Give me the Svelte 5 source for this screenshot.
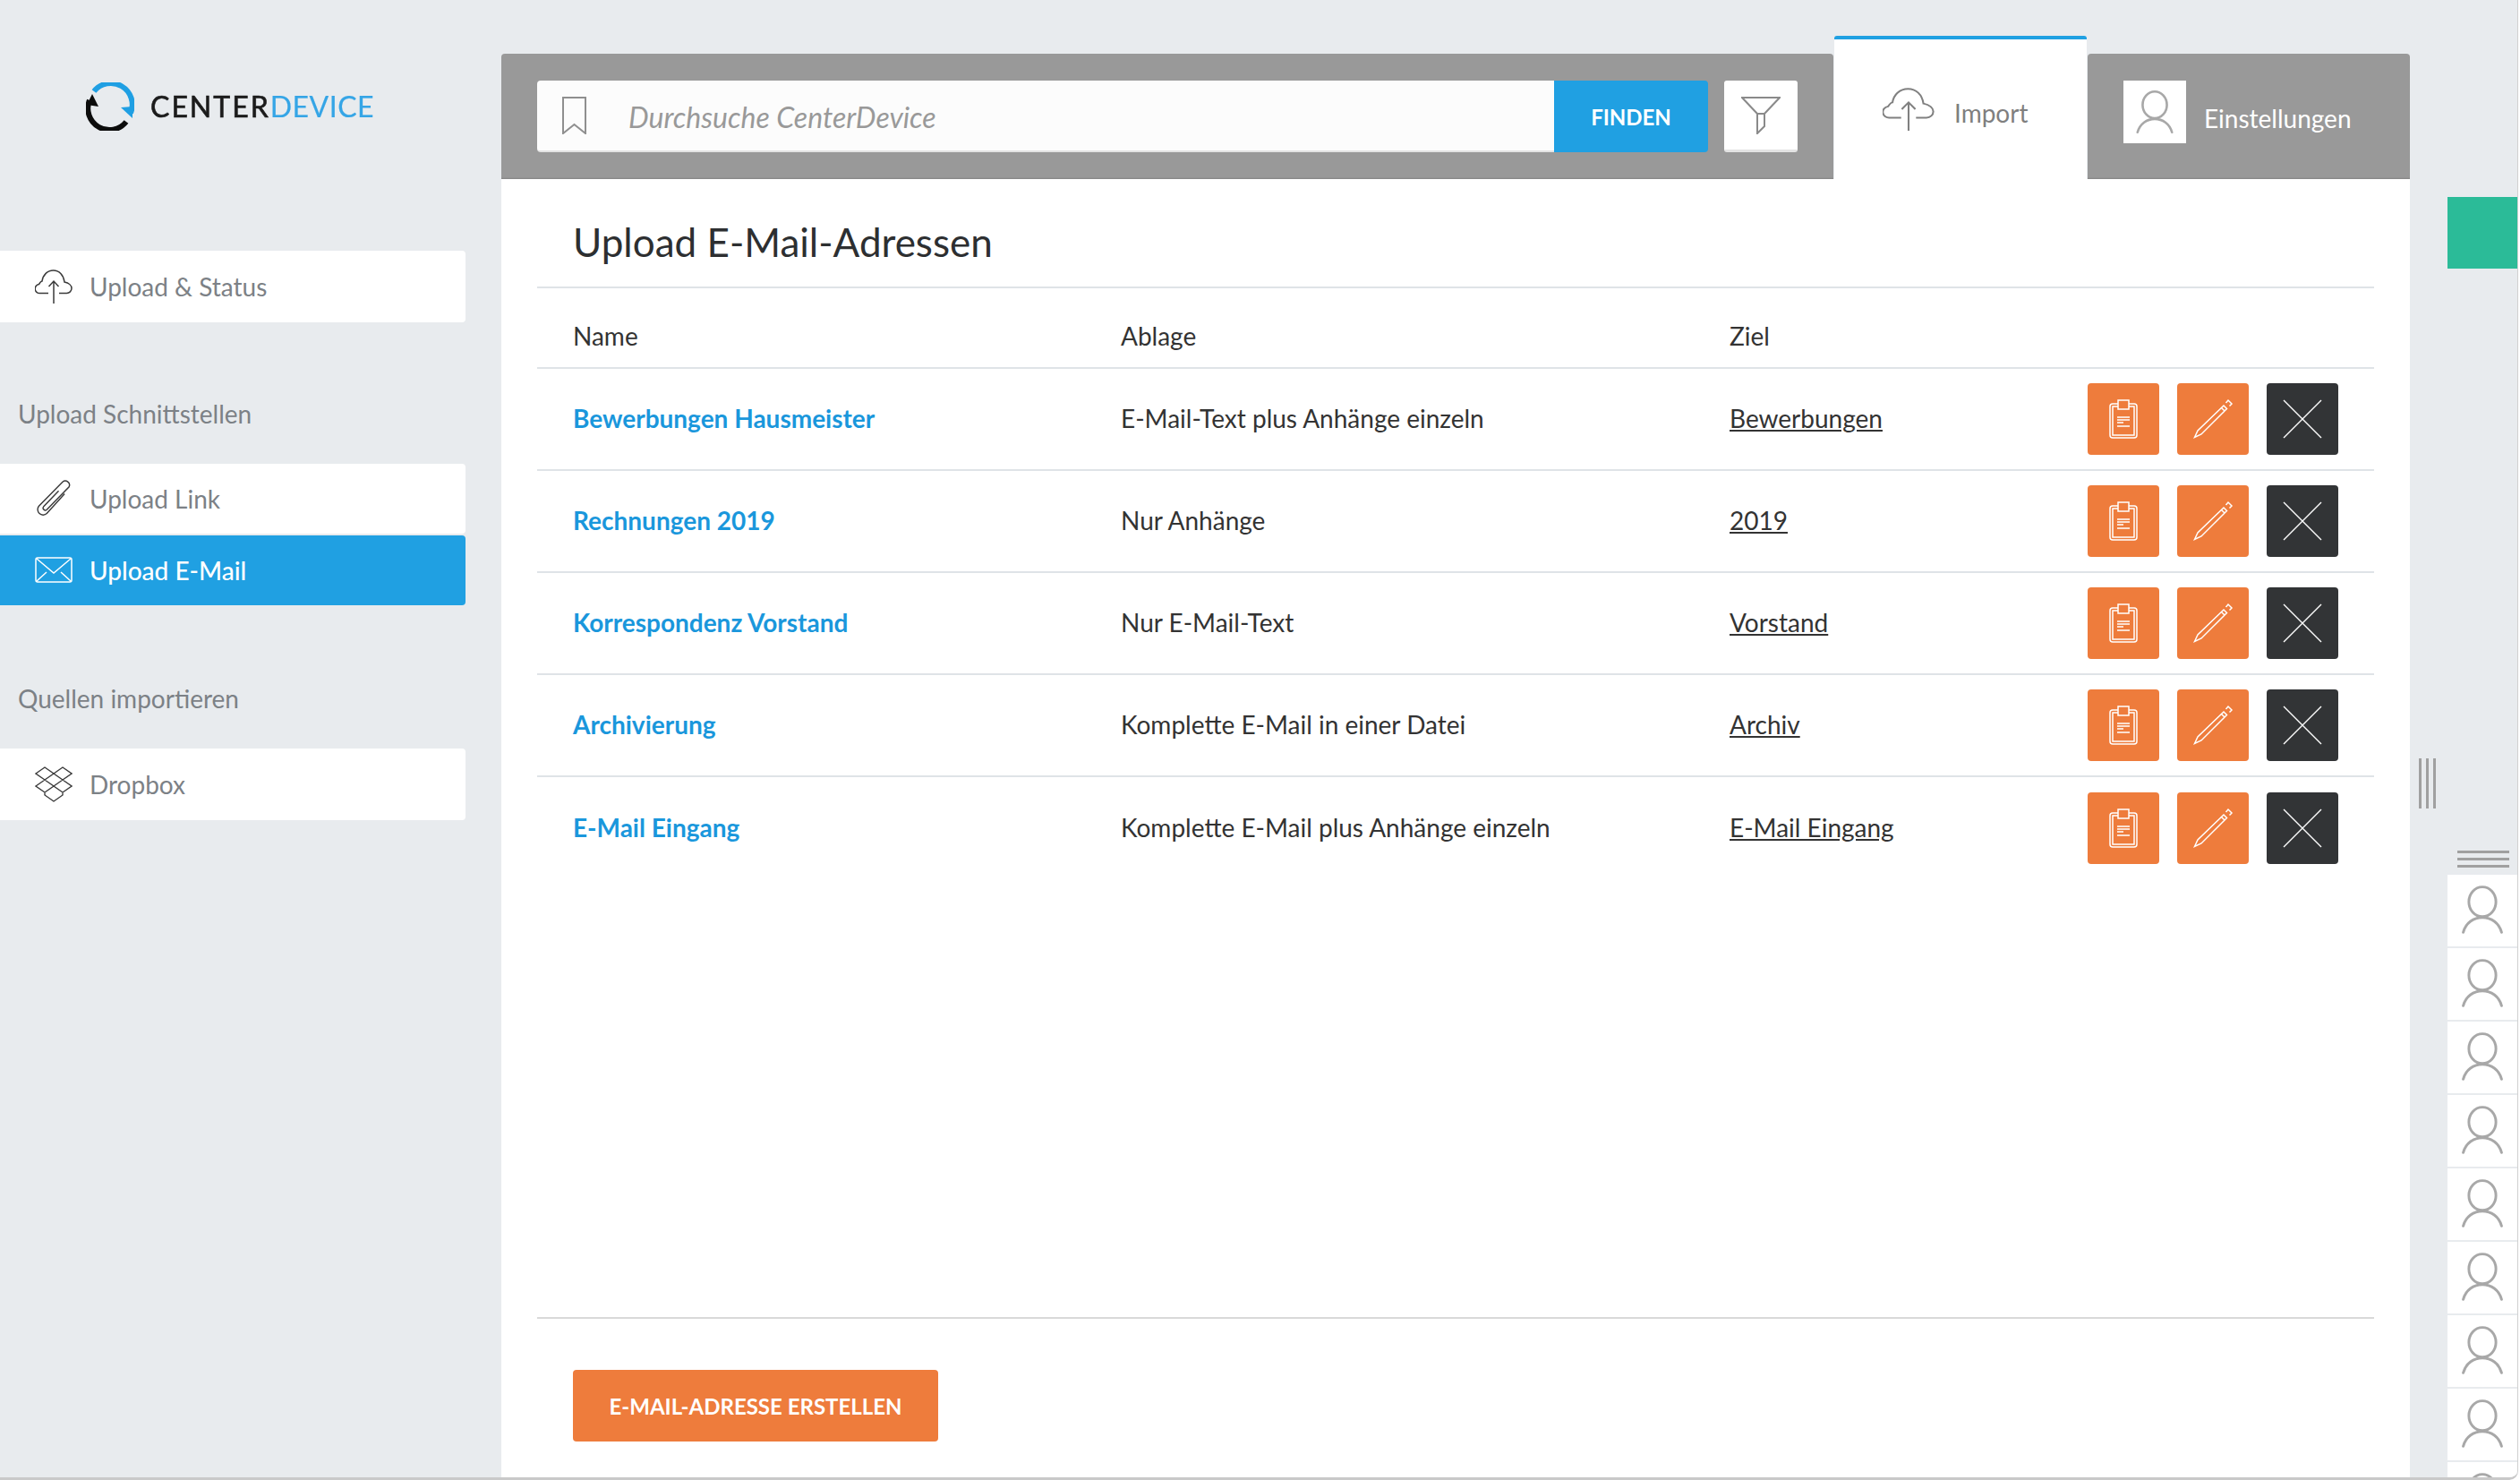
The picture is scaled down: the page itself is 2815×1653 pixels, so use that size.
<script>
  const ROWS = [
    { name: 'Bewerbungen Hausmeister', ablage: 'E-Mail-Text plus Anhänge einzeln', ziel: 'Bewerbungen' },
    { name: 'Rechnungen 2019', ablage: 'Nur Anhänge', ziel: '2019' },
    { name: 'Korrespondenz Vorstand', ablage: 'Nur E-Mail-Text', ziel: 'Vorstand' },
    { name: 'Archivierung', ablage: 'Komplette E-Mail in einer Datei', ziel: 'Archiv' },
    { name: 'E-Mail Eingang', ablage: 'Komplette E-Mail plus Anhänge einzeln', ziel: 'E-Mail Eingang' },
  ];

  const AVATARS = [1, 2, 3, 4, 5, 6, 7, 8, 9];
</script>

{#snippet cloud(w, h)}
  <svg class="ico" width={w} height={h} viewBox="0 0 42 38" preserveAspectRatio="none" fill="none" stroke="currentColor" stroke-width="1.5">
    <path d="M15 26.5H6a5 5 0 0 1-1.500-10C6 14 7 13 8 13c1-7 6-12 12.500-12C27 1 32 6 33 14c5 1 8 4 8 7a5.500 5.500 0 0 1-5.500 5.500H27" />
    <path d="M21 38V13M15.500 19l5.500-6 5.500 6" />
  </svg>
{/snippet}

{#snippet avatar(size)}
  <svg class="avatar" width={size} height={size} viewBox="0 0 78 80" fill="none" stroke="#a8a8a8" stroke-width="3">
    <ellipse cx="39" cy="31" rx="15.5" ry="17" />
    <path d="M17 66c3-11 12-17 22-17s19 6 22 17" stroke-linecap="round" />
  </svg>
{/snippet}

<div class="window">
  <aside class="sidebar">
    <div class="logo">
      <svg width="54" height="54" viewBox="0 0 54 54" fill="none" stroke-width="6">
        <path d="M9 10A24 24 0 0 1 50 34" stroke="#1f9fe3" />
        <path d="M39 28l13-1v13z" fill="#1f9fe3" />
        <path d="M45 44A24 24 0 0 1 4 20" stroke="#0c0c0c" />
        <path d="M7 13L1 25l13 2z" fill="#0c0c0c" />
      </svg>
      <span class="logo-text">CENTER<span class="logo-blue">DEVICE</span></span>
    </div>

    <a class="nav-item tall">
      {@render cloud(42, 38)}
      <span>Upload &amp; Status</span>
    </a>

    <div class="nav-title">Upload Schnittstellen</div>
    <a class="nav-item">
      <svg class="ico" width="42" height="42" viewBox="1 1 38 38" fill="none" stroke="currentColor" stroke-width="1.3">
        <path d="M31 15L13 35a5.500 5.500 0 0 1-8-7.500L29 3a4.200 4.200 0 0 1 6.500 5L13 31a2.200 2.200 0 0 1-3.200-3L25 12" />
      </svg>
      <span>Upload Link</span>
    </a>
    <a class="nav-item active">
      <svg class="ico" width="42" height="30" viewBox="0 0 42 30" fill="none" stroke="currentColor" stroke-width="1.5">
        <rect x="1" y="1" width="40" height="27" rx="2" />
        <path d="M2 2l19 16L40 2M2 27l11-10M40 27L29 17" />
      </svg>
      <span>Upload E-Mail</span>
    </a>

    <div class="nav-title second">Quellen importieren</div>
    <a class="nav-item tall">
      <svg class="ico" width="42" height="40" viewBox="0 0 42 40" fill="none" stroke="currentColor" stroke-width="1.4">
        <path d="M1 8l10-7 10 7-10 7zM21 8l10-7 10 7-10 7zM1 22l10-7 10 7-10 7zM21 22l10-7 10 7-10 7zM11 29v3l10 7 10-7v-3" />
      </svg>
      <span>Dropbox</span>
    </a>
  </aside>

  <main class="main">
    <header class="topbar">
      <div class="searchbar">
        <div class="search-input">
          <svg width="27" height="42" viewBox="0 0 27 42" fill="none" stroke="#8f8f8f" stroke-width="2">
            <path d="M1 1h25v40L13.500 31 1 41z" />
          </svg>
          <span class="placeholder">Durchsuche CenterDevice</span>
        </div>
        <button class="find">FINDEN</button>
        <button class="filter">
          <svg width="44" height="42" viewBox="0 0 44 42" fill="none" stroke="#8a8a8a" stroke-width="2">
            <path d="M1 1h42L26 19v14l-8 8V19zM18 19h8" />
          </svg>
        </button>
      </div>
      <div class="tab-import">
        {@render cloud(58, 48)}
        <span>Import</span>
      </div>
      <div class="settings">
        <div class="settings-avatar">{@render avatar(70)}</div>
        <span>Einstellungen</span>
      </div>
    </header>

    <section class="panel">
      <h1>Upload E-Mail-Adressen</h1>
      <div class="row head">
        <div>Name</div>
        <div>Ablage</div>
        <div>Ziel</div>
      </div>
      {#each ROWS as row (row.name)}
        <div class="row">
          <div><a class="name">{row.name}</a></div>
          <div>{row.ablage}</div>
          <div><a class="target">{row.ziel}</a></div>
          <div class="actions">
            <button class="act">
              <svg width="80" height="80" viewBox="0 0 80 80" fill="none" stroke="#fff" stroke-width="1.5">
                <rect x="25" y="23" width="30" height="38" rx="3" />
                <rect x="28" y="26" width="24" height="32" />
                <rect x="34" y="19" width="12" height="10" fill="#ee7c3c" />
                <path d="M33 38h14M33 41h14M33 44h7M33 48h14" />
              </svg>
            </button>
            <button class="act">
              <svg width="80" height="80" viewBox="0 0 80 80" fill="none" stroke="#fff" stroke-width="1.5">
                <path d="M19.500 60.500L23 53l29-28 3.500 3.500L27 57zM49.500 27.500l3.500 3.500" />
                <path d="M54.500 22l2.500-3 4 4-2.500 2.500" />
              </svg>
            </button>
            <button class="act dark">
              <svg width="80" height="80" viewBox="0 0 80 80" fill="none" stroke="#fff" stroke-width="1.4">
                <path d="M19 19l42 42M61 19L19 61" />
              </svg>
            </button>
          </div>
        </div>
      {/each}
      <div class="spacer"></div>
      <div class="panel-foot">
        <button class="create">E-MAIL-ADRESSE ERSTELLEN</button>
      </div>
    </section>
  </main>

  <div class="rail">
    <div class="grip-col">
      <i></i><i></i><i></i>
    </div>
    <div class="strip">
      <div class="green"></div>
      <div class="hgrip"><i></i><i></i><i></i></div>
      {#each AVATARS as a (a)}
        <div class="user">{@render avatar(78)}</div>
      {/each}
    </div>
  </div>
</div>

<style>
  :global(body) {
    margin: 0;
    background: #fff;
    font-family: Lato, "Open Sans", sans-serif;
    overflow: hidden;
  }

  button { font-family: inherit; border: 0; padding: 0; cursor: pointer; }

  .window {
    display: flex;
    width: 2812px;
    height: 1650px;
    background: #e8ebee;
    border-right: 1px solid #d0d0d0;
    border-bottom: 3px solid #c9c9c9;
    border-bottom-right-radius: 10px;
    overflow: hidden;
    box-sizing: content-box;
  }

  /* sidebar */
  .sidebar { width: 520px; margin-right: 40px; flex-shrink: 0; }

  .logo { display: flex; align-items: center; height: 54px; margin: 92px 0 134px 96px; gap: 18px; filter: blur(0.4px); }
  .logo-text {
    font-size: 32px; font-weight: 400; color: #1b1b1b; letter-spacing: 2px; line-height: 1;
    -webkit-text-stroke: 0.6px #1b1b1b;
  }
  .logo-blue { color: #35a5e6; letter-spacing: 0.5px; -webkit-text-stroke: 0.2px #35a5e6; }

  .nav-item {
    display: flex; align-items: center; gap: 19px;
    height: 78px; margin-bottom: 2px; padding-left: 39px;
    background: #fff; border-radius: 0 4px 4px 0;
    font-size: 28px; color: #7c8186;
  }
  .nav-item.tall { height: 80px; margin: 0; }
  .nav-item .ico { color: #3a3a3a; flex-shrink: 0; }
  .nav-item.active { background: #20a0e2; color: #fff; font-weight: 500; }
  .nav-item.active .ico { color: #fff; }

  .nav-title { font-size: 28px; color: #7c8186; padding-left: 20px; line-height: 34px; margin: 85px 0 39px; }
  .nav-title.second { margin: 87px 0 39px; }

  /* main column */
  .main { width: 2132px; flex-shrink: 0; display: flex; flex-direction: column; }

  .topbar { display: flex; align-items: flex-end; height: 200px; }

  .searchbar {
    display: flex; gap: 18px; width: 1488px; height: 140px;
    padding: 30px 40px; box-sizing: border-box;
    background: #999; border-top-left-radius: 4px; border-top-right-radius: 4px;
    box-shadow: inset 0 -2px 2px -1px #848484;
  }
  .search-input {
    display: flex; align-items: center; flex: 1; gap: 47px; padding-left: 28px;
    background: #fcfcfc; border-radius: 4px 0 0 4px; border-bottom: 2px solid #e3e3e3;
    box-sizing: border-box; margin-right: -18px;
  }
  .placeholder { font-size: 32px; font-style: italic; color: #999; padding-top: 3px; }
  .find {
    width: 172px; background: #20a0e2; color: #fff;
    font-size: 24px; font-weight: 700; border-radius: 0 4px 4px 0;
  }
  .filter {
    width: 82px; background: #fff; border-bottom: 3px solid #e3e3e3; border-radius: 3px;
    display: flex; align-items: center; justify-content: center;
  }

  .tab-import {
    display: flex; align-items: center; gap: 22px;
    width: 282px; height: 160px; margin-left: 1px; padding-left: 54px; box-sizing: border-box;
    background: #fff; border-top: 4px solid #20a0e2; border-radius: 3px 3px 0 0;
    font-size: 28px; color: #7f7f7f;
  }
  .tab-import span { padding-top: 8px; }
  .tab-import .ico { color: #808080; flex-shrink: 0; }

  .settings {
    display: flex; align-items: flex-start; gap: 20px;
    flex: 1; height: 140px; margin-left: 1px; padding: 30px 0 0 40px; box-sizing: border-box;
    background: #999; border-radius: 4px 4px 0 0; color: #fff; font-size: 28px;
    box-shadow: inset 0 -2px 2px -1px #848484;
  }
  .settings span { line-height: 84px; }
  .settings-avatar { width: 70px; height: 70px; background: #fff; }
  .avatar { display: block; }

  /* panel */
  .panel { flex: 1; display: flex; flex-direction: column; background: #fff; padding: 0 40px; color: #333; }
  h1 {
    margin: 0; padding: 0 40px; height: 122px; line-height: 140px;
    font-size: 44px; font-weight: 400; color: #2d2f31;
    border-bottom: 2px solid #dfe3e7; box-sizing: border-box;
  }
  .row {
    display: grid; grid-template-columns: 612px 680px 400px 1fr; align-items: center;
    height: 114px; padding-left: 40px; box-sizing: border-box;
    border-bottom: 2px solid #dfe3e7; font-size: 28px;
  }
  .row > div:not(.actions) { padding-bottom: 2px; }
  .row.head { height: 90px; padding-top: 20px; }
  .row:nth-last-child(3) { border-bottom: 0; }
  .name { color: #1a97dc; font-weight: 700; }
  .target { color: #333; text-decoration: underline; }
  .actions { display: flex; gap: 20px; }
  .act { width: 80px; height: 80px; background: #ee7c3c; border-radius: 4px; }
  .act svg { display: block; }
  .act.dark { background: #323436; }
  .spacer { flex: 1; }
  .panel-foot { height: 179px; padding: 57px 0 0 40px; box-sizing: border-box; border-top: 2px solid #d9d9d9; }
  .create {
    width: 408px; height: 80px; background: #ee7c3c; color: #fff;
    font-size: 24px; font-weight: 700; border-radius: 4px;
  }

  /* right rail */
  .rail { display: flex; flex: 1; }
  .grip-col { display: flex; gap: 5px; width: 42px; padding: 847px 0 0 10px; box-sizing: border-box; }
  .grip-col i { width: 3px; height: 56px; background: #a0a0a0; }
  .strip { width: 78px; }
  .green { height: 80px; margin-top: 220px; background: #2bbb98; }
  .hgrip { display: flex; flex-direction: column; gap: 5px; margin: 650px 9px 8px 11px; }
  .hgrip i { height: 3px; background: #a0a0a0; }
  .user { height: 80px; margin-bottom: 2px; background: #fff; }
</style>
